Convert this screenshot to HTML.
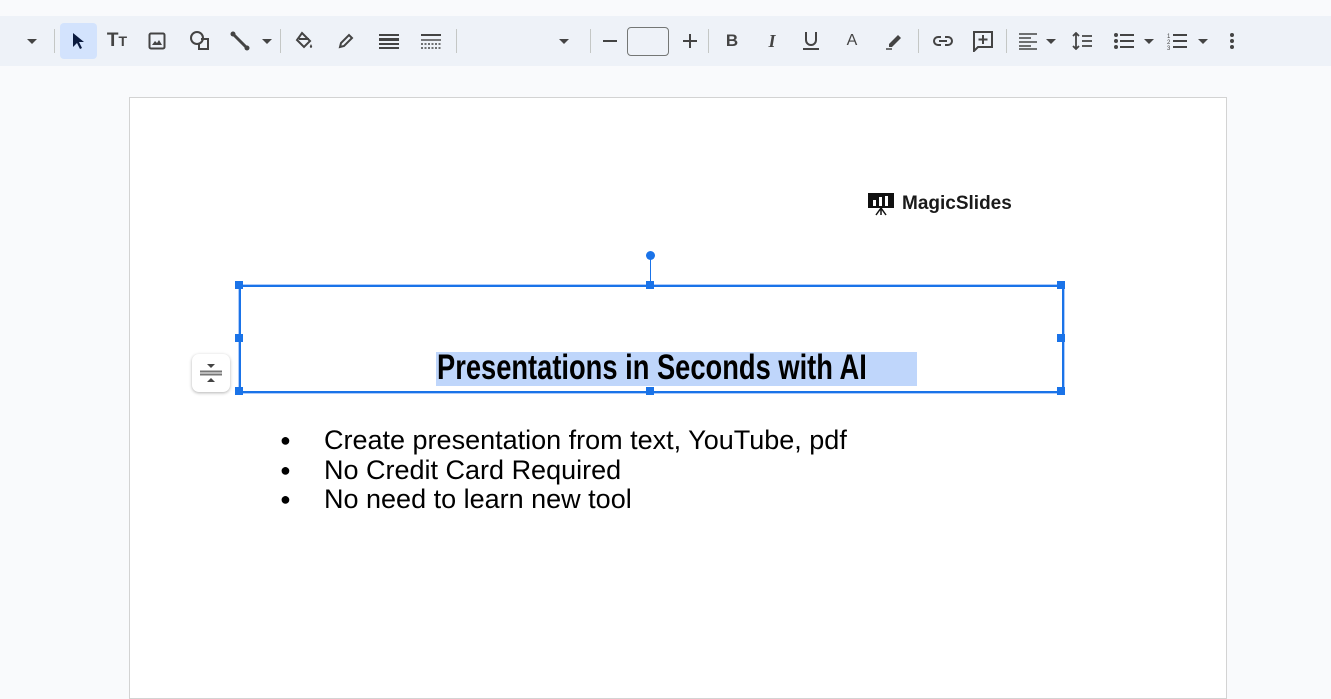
<!DOCTYPE html>
<html><head><style>
body{margin:0;width:1331px;height:670px;background:#f9fafc;position:relative;overflow:hidden;font-family:"Liberation Sans",sans-serif}
.tb{position:absolute;left:0;top:16px;width:1331px;height:50px;background:#eef2f8}
.i{position:absolute;top:0;height:50px;display:flex;align-items:center;justify-content:center}
.sep{position:absolute;top:29px;width:1px;height:24px;background:#c4c7c5}
svg{display:block}
.slide{position:absolute;left:129px;top:97px;width:1096px;height:600px;background:#fff;border:1px solid #d3d3d3}
.h{position:absolute;width:8px;height:8px;background:#1a73e8}
</style></head><body>
<div class="tb">
<div class="i" style="left:24px;width:16px"><svg width="10" height="5"><path d="M0 0h10L5 5z" fill="#444"/></svg></div>
<div class="sep" style="left:54px;top:13px"></div>
<div style="position:absolute;left:60px;top:7px;width:37px;height:36px;background:#d3e3fd;border-radius:4px"></div>
<div class="i" style="left:68px;width:20px"><svg width="14" height="18"><path d="M2 1v14l4-4 3 6 2-1-3-6h5z" fill="#0b1b3f"/></svg></div>
<div class="i" style="left:105px;width:24px;font-weight:bold;color:#444;font-size:19px">T<span style="font-size:14px">T</span></div>
<div class="i" style="left:147px;width:20px"><svg width="18" height="18"><rect x="1.5" y="1.5" width="15" height="15" rx="1.5" fill="none" stroke="#444" stroke-width="2"/><path d="M4 13l3-4 2 2 2-3 3 5z" fill="#444"/></svg></div>
<div class="i" style="left:188px;width:24px"><svg width="22" height="22"><circle cx="8" cy="8" r="6" fill="none" stroke="#444" stroke-width="2"/><path d="M12 9h7v10h-9v-5" fill="none" stroke="#444" stroke-width="2"/></svg></div>
<div class="i" style="left:229px;width:22px"><svg width="20" height="20"><path d="M3 3l14 14" stroke="#444" stroke-width="3"/><circle cx="3" cy="3" r="2.5" fill="#444"/><circle cx="17" cy="17" r="2.5" fill="#444"/></svg></div>
<div class="i" style="left:261px;width:12px"><svg width="10" height="5"><path d="M0 0h10L5 5z" fill="#444"/></svg></div>
<div class="sep" style="left:280px;top:13px"></div>
<div class="i" style="left:293px;width:22px"><svg width="20" height="20"><path d="M8 2l8 8-6 6-7-7z" fill="none" stroke="#444" stroke-width="2"/><path d="M5 8h10" stroke="#444" stroke-width="2"/><path d="M17 13c1 2 2 3 0 4-2-1-1-2 0-4z" fill="#444"/></svg></div>
<div class="i" style="left:335px;width:22px"><svg width="18" height="18"><path d="M3 15l1-4 8-8 3 3-8 8z" fill="none" stroke="#444" stroke-width="2"/></svg></div>
<div class="i" style="left:378px;width:22px"><svg width="20" height="16"><rect y="1" width="20" height="2" fill="#444"/><rect y="5" width="20" height="3" fill="#444"/><rect y="10" width="20" height="2" fill="#444"/><rect y="14" width="20" height="2" fill="#444"/></svg></div>
<div class="i" style="left:420px;width:22px"><svg width="20" height="16"><rect y="1" width="20" height="2" fill="#444"/><rect y="6" width="20" height="2" fill="#444" opacity=".7"/><path d="M0 11h20M0 15h20" stroke="#444" stroke-width="1.5" stroke-dasharray="2 1.5"/></svg></div>
<div class="sep" style="left:456px;top:13px"></div>
<div class="i" style="left:558px;width:12px"><svg width="10" height="5"><path d="M0 0h10L5 5z" fill="#444"/></svg></div>
<div class="sep" style="left:590px;top:13px"></div>
<div class="i" style="left:602px;width:16px"><svg width="14" height="2"><rect width="14" height="2" fill="#444"/></svg></div>
<div style="position:absolute;left:627px;top:11px;width:40px;height:27px;border:1px solid #747775;border-radius:4px;background:#eef2f8"></div>
<div class="i" style="left:682px;width:16px"><svg width="14" height="14"><path d="M7 0v14M0 7h14" stroke="#444" stroke-width="2"/></svg></div>
<div class="sep" style="left:708px;top:13px"></div>
<div class="i" style="left:722px;width:20px;font-weight:bold;color:#444;font-size:17px">B</div>
<div class="i" style="left:762px;width:20px;color:#444;font-size:18px;font-family:'Liberation Serif',serif;font-style:italic;font-weight:bold">I</div>
<div class="i" style="left:800px;width:22px"><svg width="16" height="20"><path d="M3 1v8a5 5 0 0010 0V1" fill="none" stroke="#444" stroke-width="2"/><rect y="17" width="16" height="2" fill="#444"/></svg></div>
<div class="i" style="left:842px;width:20px;color:#444;font-size:16px">A</div>
<div class="i" style="left:883px;width:22px"><svg width="18" height="18"><path d="M4 12l9-9 3 3-9 9H4z" fill="#444"/><path d="M1 17h6" stroke="#444" stroke-width="1.5"/></svg></div>
<div class="sep" style="left:918px;top:13px"></div>
<div class="i" style="left:931px;width:24px"><svg width="22" height="12"><path d="M9 2H6a4 4 0 000 8h3M13 2h3a4 4 0 010 8h-3M7 6h8" fill="none" stroke="#444" stroke-width="2"/></svg></div>
<div class="i" style="left:971px;width:24px"><svg width="22" height="22"><path d="M2 2h18v15H6l-4 4z" fill="none" stroke="#444" stroke-width="2"/><path d="M11 5v9M6.5 9.5h9" stroke="#444" stroke-width="2"/></svg></div>
<div class="sep" style="left:1006px;top:13px"></div>
<div class="i" style="left:1017px;width:22px"><svg width="18" height="18"><path d="M0 2h18M0 6h12M0 10h18M0 14h12M0 17h18" stroke="#444" stroke-width="1.6"/></svg></div>
<div class="i" style="left:1045px;width:12px"><svg width="10" height="5"><path d="M0 0h10L5 5z" fill="#444"/></svg></div>
<div class="i" style="left:1071px;width:22px"><svg width="20" height="18"><path d="M4 1v16M1 4l3-3 3 3M1 14l3 3 3-3M10 4h10M10 9h10M10 14h10" fill="none" stroke="#444" stroke-width="1.8"/></svg></div>
<div class="i" style="left:1113px;width:22px"><svg width="20" height="16"><circle cx="2" cy="2" r="2" fill="#444"/><circle cx="2" cy="8" r="2" fill="#444"/><circle cx="2" cy="14" r="2" fill="#444"/><path d="M6 2h14M6 8h14M6 14h14" stroke="#444" stroke-width="2"/></svg></div>
<div class="i" style="left:1143px;width:12px"><svg width="10" height="5"><path d="M0 0h10L5 5z" fill="#444"/></svg></div>
<div class="i" style="left:1166px;width:22px"><svg width="20" height="18"><text x="0" y="6" font-size="6" fill="#444">1</text><text x="0" y="12" font-size="6" fill="#444">2</text><text x="0" y="18" font-size="6" fill="#444">3</text><path d="M6 3h14M6 9h14M6 15h14" stroke="#444" stroke-width="2"/></svg></div>
<div class="i" style="left:1197px;width:12px"><svg width="10" height="5"><path d="M0 0h10L5 5z" fill="#444"/></svg></div>
<div class="i" style="left:1226px;width:12px"><svg width="4" height="16"><circle cx="2" cy="2" r="2" fill="#444"/><circle cx="2" cy="8" r="2" fill="#444"/><circle cx="2" cy="14" r="2" fill="#444"/></svg></div>
</div>
<div class="slide"></div>
<div style="position:absolute;left:868px;top:192px;display:flex;align-items:center">
<svg width="26" height="24"><rect x="0" y="1" width="26" height="15" fill="#111"/><rect x="5" y="8" width="3" height="6" fill="#fff"/><rect x="11" y="5" width="3" height="9" fill="#fff"/><rect x="17" y="4" width="3" height="10" fill="#fff"/><path d="M13 16v7M13 16l-5 7M13 16l5 7" stroke="#111" stroke-width="1.5"/></svg>
<span style="font-weight:bold;font-size:19px;color:#1a1a1a;margin-left:8px">MagicSlides</span></div>
<div style="position:absolute;left:650px;top:255px;width:1px;height:30px;background:#1a73e8"></div>
<div style="position:absolute;left:646px;top:251px;width:9px;height:9px;border-radius:50%;background:#1a73e8"></div>
<div style="position:absolute;left:239px;top:285px;width:821px;height:104px;border:2px solid #1a73e8;box-shadow:0 0 0 1px #aecbfa"></div>
<div class="h" style="left:235px;top:281px"></div><div class="h" style="left:646px;top:281px"></div><div class="h" style="left:1057px;top:281px"></div>
<div class="h" style="left:235px;top:334px"></div><div class="h" style="left:1057px;top:334px"></div>
<div class="h" style="left:235px;top:387px"></div><div class="h" style="left:646px;top:387px"></div><div class="h" style="left:1057px;top:387px"></div>
<div style="position:absolute;left:436px;top:352px;width:481px;height:34px;background:#bfd6fb"></div>
<div style="position:absolute;left:437px;top:347px;font-weight:bold;font-size:35px;color:#000;white-space:nowrap;line-height:42px;transform:scaleX(0.78);transform-origin:0 0">Presentations in Seconds with AI</div>
<div style="position:absolute;left:192px;top:354px;width:38px;height:38px;background:#fff;border-radius:7px;box-shadow:0 1px 3px rgba(0,0,0,.3);display:flex;align-items:center;justify-content:center"><svg width="24" height="24"><path d="M8 3h8l-4 4z" fill="#444"/><path d="M1 10.5h22M1 13.5h22" stroke="#777" stroke-width="2"/><path d="M8 21h8l-4-4z" fill="#444"/></svg></div>
<div style="position:absolute;left:280px;top:426px;font-size:27px;line-height:29.5px;color:#000">
<div><span style="display:inline-block;width:44px;font-size:18px;vertical-align:3px">●</span>Create presentation from text, YouTube, pdf</div>
<div><span style="display:inline-block;width:44px;font-size:18px;vertical-align:3px">●</span>No Credit Card Required</div>
<div><span style="display:inline-block;width:44px;font-size:18px;vertical-align:3px">●</span>No need to learn new tool</div>
</div>
</body></html>
